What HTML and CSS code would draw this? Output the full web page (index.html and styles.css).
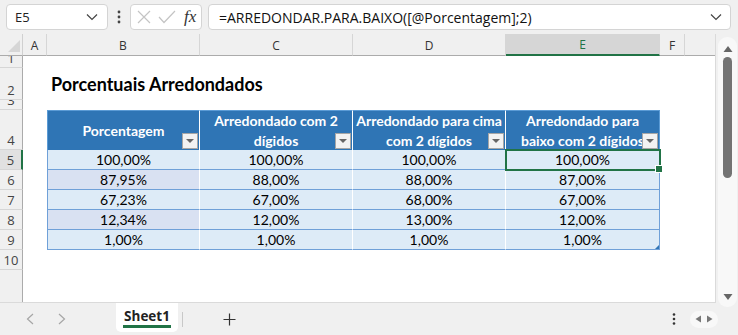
FILE: index.html
```html
<!DOCTYPE html>
<html lang="pt">
<head>
  <meta charset="UTF-8" />
  <meta name="viewport" content="width=device-width, initial-scale=1.0"/>
  <title>Porcentuais Arredondados</title>
  <link rel="stylesheet" href="styles.css">
</head>
<body>
  <div class="toolbar">
    <div class="namebox">
      <span>E5</span>
      <svg width="12" height="8" viewBox="0 0 12 8"><polyline points="1,1.5 6,6.5 11,1.5" fill="none" stroke="#444" stroke-width="1.2"/></svg>
    </div>
    <svg class="more" width="4" height="14" viewBox="0 0 4 14"><circle cx="2" cy="2" r="1.4" fill="#444"/><circle cx="2" cy="7" r="1.4" fill="#444"/><circle cx="2" cy="12" r="1.4" fill="#444"/></svg>
    <div class="fxbox">
      <svg width="16" height="16" viewBox="0 0 16 16"><path d="M2 2 L14 14 M14 2 L2 14" stroke="#c4c4c4" stroke-width="1.2"/></svg>
      <svg width="18" height="16" viewBox="0 0 18 16"><polyline points="1,8 6,13.5 17,2" fill="none" stroke="#c4c4c4" stroke-width="1.2"/></svg>
      <span class="fx">fx</span>
    </div>
    <div class="formula">
      <span>=ARREDONDAR.PARA.BAIXO([@Porcentagem];2)</span>
      <svg width="12" height="8" viewBox="0 0 12 8"><polyline points="1,1.5 6,6.5 11,1.5" fill="none" stroke="#444" stroke-width="1.2"/></svg>
    </div>
  </div>

  <div class="main">
    <div class="sheet">
      <div class="corner">
        <svg width="12" height="12" viewBox="0 0 12 12"><polygon points="12,0 12,12 0,12" fill="#d6d6d6"/></svg>
      </div>
      <div class="ch">A</div>
      <div class="ch">B</div>
      <div class="ch">C</div>
      <div class="ch">D</div>
      <div class="ch active">E</div>
      <div class="ch">F</div>
      <div class="ch fill"></div>

      <div class="rh">1</div>
      <div class="rh">2</div>
      <div class="rh">3</div>
      <div class="rh">4</div>
      <div class="rh active">5</div>
      <div class="rh">6</div>
      <div class="rh">7</div>
      <div class="rh">8</div>
      <div class="rh">9</div>
      <div class="rh">10</div>
      <div class="rh fill"></div>

      <div class="title">Porcentuais Arredondados</div>

      <div class="tbl">
        <div class="th">Porcentagem<span class="filter"></span></div>
        <div class="th">Arredondado com 2<br>dígidos<span class="filter"></span></div>
        <div class="th">Arredondado para cima<br>com 2 dígidos<span class="filter"></span></div>
        <div class="th last">Arredondado para<br>baixo com 2 dígidos<span class="filter"></span></div>

        <div class="td">100,00%</div>
        <div class="td">100,00%</div>
        <div class="td">100,00%</div>
        <div class="td last sel">100,00%</div>

        <div class="td alt">87,95%</div>
        <div class="td">88,00%</div>
        <div class="td">88,00%</div>
        <div class="td last">87,00%</div>

        <div class="td">67,23%</div>
        <div class="td">67,00%</div>
        <div class="td">68,00%</div>
        <div class="td last">67,00%</div>

        <div class="td alt">12,34%</div>
        <div class="td">12,00%</div>
        <div class="td">13,00%</div>
        <div class="td last">12,00%</div>

        <div class="td">1,00%</div>
        <div class="td">1,00%</div>
        <div class="td">1,00%</div>
        <div class="td last end">1,00%</div>
      </div>
    </div>

    <div class="vscroll">
      <div class="track">
        <svg width="10" height="8" viewBox="0 0 10 8"><polygon points="5,1 9.5,7 0.5,7" fill="#666"/></svg>
        <div class="thumb"></div>
        <div class="grow"></div>
        <svg width="10" height="8" viewBox="0 0 10 8"><polygon points="0.5,1 9.5,1 5,7" fill="#666"/></svg>
      </div>
    </div>
  </div>

  <div class="bottombar">
    <svg class="nav" width="8" height="12" viewBox="0 0 8 12"><polyline points="7,1 1.5,6 7,11" fill="none" stroke="#a6a6a6" stroke-width="1.2"/></svg>
    <svg class="nav" width="8" height="12" viewBox="0 0 8 12"><polyline points="1,1 6.5,6 1,11" fill="none" stroke="#a6a6a6" stroke-width="1.2"/></svg>
    <div class="tab"><span>Sheet1</span></div>
    <div class="sep"></div>
    <svg class="plus" width="13" height="13" viewBox="0 0 13 13"><path d="M6.5 0.5 V12.5 M0.5 6.5 H12.5" stroke="#333" stroke-width="1.2"/></svg>
    <div class="spacer"></div>
    <svg class="dots" width="4" height="12" viewBox="0 0 4 12"><circle cx="2" cy="1.5" r="1.3" fill="#333"/><circle cx="2" cy="6" r="1.3" fill="#333"/><circle cx="2" cy="10.5" r="1.3" fill="#333"/></svg>
    <div class="hpill">
      <svg width="7" height="8" viewBox="0 0 7 8"><polygon points="0.5,4 6,0.5 6,7.5" fill="#777"/></svg>
      <svg width="7" height="8" viewBox="0 0 7 8"><polygon points="6.5,4 1,0.5 1,7.5" fill="#777"/></svg>
    </div>
  </div>
</body>
</html>
```

FILE: styles.css
```css
* { box-sizing: border-box; }
body { margin: 0; width: 738px; height: 335px; overflow: hidden; background: #f0f0f0; font-family: "Open Sans", "Noto Sans", sans-serif; color: #222; }

/* formula bar */
.toolbar { height: 34px; display: flex; align-items: center; padding: 4px 7px 4px 6px; gap: 0; }
.namebox { width: 102px; height: 26px; background: white; border: 1px solid #d4d4d4; border-radius: 4px; display: flex; align-items: center; justify-content: space-between; padding: 0 9px 0 8px; font-size: 13px; }
.more { margin: 0 9px 0 9px; }
.fxbox { width: 72px; height: 26px; background: white; border: 1px solid #d4d4d4; border-radius: 4px; display: flex; align-items: center; padding: 0 4px 0 5px; gap: 6px; }
.fx { font-family: "Liberation Serif", serif; font-style: italic; font-size: 17px; color: #333; margin-left: 2px; }
.formula { flex: 1; margin-left: 6px; height: 26px; background: white; border: 1px solid #d4d4d4; border-radius: 4px; display: flex; align-items: center; justify-content: space-between; padding: 0 8px 0 10px; font-size: 14px; color: #111; }

/* grid */
.main { display: flex; height: 269px; }
.sheet { width: 716px; display: grid; grid-template-columns: 23px 24px 153px 153px 153px 154px 25px 1fr; grid-template-rows: 22px 12px 32px 10px 40px repeat(6, 20px) 1fr; background: white; border-right: 1px solid #dadada; border-bottom: 1px solid #dadada; }
.corner { grid-row: 1; grid-column: 1; background: #f0f0f0; border-right: 1px solid #d0d0d0; border-bottom: 1px solid #ababab; display: flex; align-items: flex-end; justify-content: flex-end; padding: 0 2px 3px 0; }
.ch { grid-row: 1; background: #f0f0f0; border-right: 1px solid #d6d6d6; border-bottom: 1px solid #ababab; font-size: 12px; color: #333; display: flex; align-items: center; justify-content: center; padding-top: 1px; }
.ch.fill { border-right: none; }
.ch.active { background: #d6d6d6; color: #217346; border-bottom: 2px solid #217346; }
.rh { grid-column: 1; background: #f0f0f0; border-right: 1px solid #ababab; border-bottom: 1px solid #d6d6d6; font-size: 13px; color: #444; display: flex; align-items: flex-end; justify-content: center; line-height: 16px; padding-bottom: 1px; overflow: hidden; }
.rh.fill { border-bottom: none; }
.rh.active { background: #e1e1e1; border-right: 2px solid #217346; }

.title { grid-row: 3; grid-column: 3 / 6; font-family: Lato, sans-serif; font-weight: bold; font-size: 18px; color: #000; padding: 0 0 5px 4px; display: flex; align-items: flex-end; }

.tbl { grid-row: 5 / 11; grid-column: 3 / 7; display: grid; grid-template-columns: 153px 153px 153px 154px; grid-template-rows: 40px repeat(5, 20px); font-family: Lato, sans-serif; }
.th { position: relative; background: #2f75b5; color: white; font-weight: bold; font-size: 14px; line-height: 20px; text-align: center; display: flex; align-items: center; justify-content: center; padding: 0 2px; white-space: nowrap; border-top: 1px solid #5b9bd5; border-right: 1px solid white; }
.th:first-child { border-left: 1px solid #5b9bd5; }
.th.last { border-right: 1px solid #5b9bd5; }
.filter { position: absolute; right: 1px; bottom: 1px; width: 16px; height: 16px; background: #f2f2f2; border: 1px solid #a6a6a6; }
.filter::after { content: ""; position: absolute; left: 3px; top: 5px; border-left: 4px solid transparent; border-right: 4px solid transparent; border-top: 4px solid #666; }
.td { position: relative; background: #ddebf7; font-size: 14px; color: #000; display: flex; align-items: center; justify-content: center; border-bottom: 1px solid #6fa0d8; border-right: 1px solid white; }
.td:nth-child(4n+1) { border-left: 1px solid #6fa0d8; }
.td.alt { background: #d9e1f2; }
.td.last { border-right: 1px solid #6fa0d8; }
.td.sel { outline: 2px solid #217346; outline-offset: -1px; z-index: 1; }
.td.sel::after { content: ""; position: absolute; right: -4px; bottom: -4px; width: 6px; height: 6px; background: #217346; border: 1px solid white; }
.td.end::after { content: ""; position: absolute; right: 0; bottom: 0; border-left: 4px solid transparent; border-bottom: 4px solid #2f75b5; }

/* vertical scrollbar */
.vscroll { flex: 1; padding: 3px 1px 0 2px; }
.track { height: 270px; background: #f8f8f8; border-radius: 9px; display: flex; flex-direction: column; align-items: center; padding: 8px 0 6px; }
.thumb { width: 9px; height: 121px; background: #737373; border-radius: 5px; margin-top: 4px; }
.grow { flex: 1; }

/* sheet tabs */
.bottombar { height: 32px; display: flex; align-items: center; padding-left: 26px; }
.nav { margin-right: 24px; }
.tab { width: 62px; height: 29px; align-self: flex-start; margin-left: 26px; background: white; border-radius: 0 0 5px 5px; display: flex; justify-content: center; padding-top: 5px; }
.tab span { font-weight: bold; font-size: 13.5px; color: #222; height: 20px; border-bottom: 3px solid #217346; padding: 0 1px; line-height: 17px; font-family: "Open Sans", sans-serif; }
.sep { width: 1px; height: 15px; background: #c8c8c8; margin-left: 4px; }
.plus { margin-left: 40px; }
.spacer { flex: 1; }
.dots { margin-right: 14px; }
.hpill { width: 28px; height: 17px; background: #f8f8f8; border-radius: 9px; display: flex; align-items: center; justify-content: space-around; padding: 0 3px; margin-right: 20px; }
```
